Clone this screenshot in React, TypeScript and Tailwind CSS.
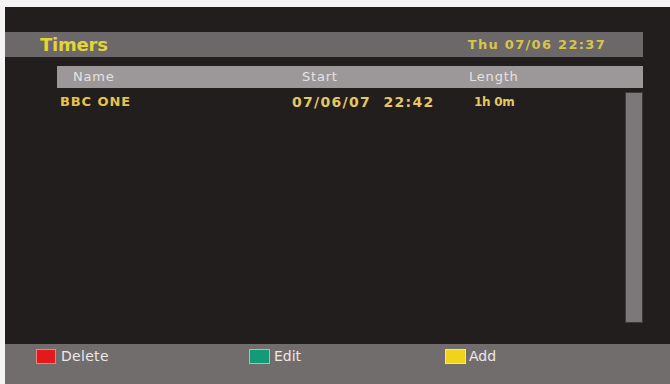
import React from "react";

const font = { fontFamily: '"DejaVu Sans", "Lato", sans-serif' };

export default function App() {
  return (
    <div className="w-[670px] h-[384px] bg-[#f4f4f4] pl-[5px] pt-[7px] flex flex-col overflow-hidden" style={font}>
      <div className="h-[337px] bg-[#221e1d] flex flex-col">
        <div className="mt-[25px] h-[25px] w-[638px] bg-[#6c686a] flex items-center justify-between pl-[35px] pr-[37px]">
          <span className="text-[18px] font-bold text-[#e2d535] tracking-[-0.2px]">Timers</span>
          <span className="text-[13px] font-bold text-[#d8c548] tracking-[1.3px]">Thu 07/06 22:37</span>
        </div>
        <div className="ml-[52px] w-[586px] mt-[9px] flex flex-col">
          <div className="h-[22px] bg-[#9c9899] flex items-center text-[13px] text-[#e6e2e2] tracking-[0.8px]">
            <span className="pl-[16px] w-[245px]">Name</span>
            <span className="w-[167px]">Start</span>
            <span>Length</span>
          </div>
          <div className="flex">
            <div className="flex-1 flex flex-col">
              <div className="h-[20px] mt-[4px] flex items-center text-[13px] font-bold text-[#e6c34a]">
                <span className="pl-[3px] w-[235px] tracking-[0.9px]">BBC ONE</span>
                <span className="w-[182px] text-[14px] tracking-[1.3px] text-[#e2c862]">07/06/07&nbsp;&nbsp;22:42</span>
                <span className="text-[12px] tracking-[-0.3px] text-[#e2c862]">1h 0m</span>
              </div>
            </div>
            <div className="w-[18px] h-[231px] mt-[4px] bg-[#7c7879] border border-[#3e3a3a]" />
          </div>
        </div>
      </div>
      <div className="flex-1 bg-[#716d6c] flex items-start pt-[2px] text-[14px] text-[#ece8e8]">
        <div className="ml-[31px] w-[213px] flex items-center gap-[5px]">
          <span className="w-[20px] h-[15px] bg-[#e3191c] border border-[#f08080]" />
          <span className="tracking-[0.3px]">Delete</span>
        </div>
        <div className="w-[196px] flex items-center gap-[4px]">
          <span className="w-[21px] h-[15px] bg-[#139b78] border border-[#7fd0b8]" />
          <span>Edit</span>
        </div>
        <div className="flex items-center gap-[3px]">
          <span className="w-[21px] h-[15px] bg-[#f0d41c] border border-[#f6e68a]" />
          <span>Add</span>
        </div>
      </div>
    </div>
  );
}
